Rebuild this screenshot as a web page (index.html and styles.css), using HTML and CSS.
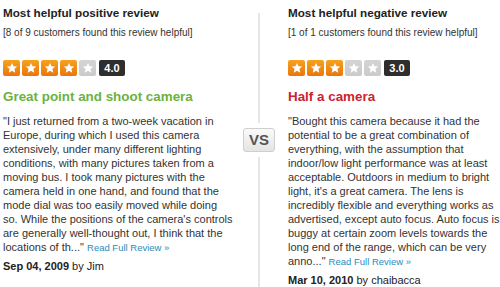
FILE: index.html
```html
<!DOCTYPE html>
<html lang="en">
<head>
    <meta charset="UTF-8">
    <meta name="viewport" content="width=device-width, initial-scale=1.0">
    <title>Most helpful reviews</title>
    <link rel="stylesheet" href="styles.css">
</head>
<body>
    <div class="compare">
        <div class="review">
            <h2 class="review-heading">Most helpful positive review</h2>
            <p class="helpful">[8 of 9 customers found this review helpful]</p>
            <div class="rating">
                <span class="star on"><svg viewBox="0 0 12 12"><path d="M6 .9l1.55 3.3 3.6.42-2.68 2.45.72 3.58L6 8.85 2.81 10.65l.72-3.58L.85 4.62l3.6-.42z"/></svg></span>
                <span class="star on"><svg viewBox="0 0 12 12"><path d="M6 .9l1.55 3.3 3.6.42-2.68 2.45.72 3.58L6 8.85 2.81 10.65l.72-3.58L.85 4.62l3.6-.42z"/></svg></span>
                <span class="star on"><svg viewBox="0 0 12 12"><path d="M6 .9l1.55 3.3 3.6.42-2.68 2.45.72 3.58L6 8.85 2.81 10.65l.72-3.58L.85 4.62l3.6-.42z"/></svg></span>
                <span class="star on"><svg viewBox="0 0 12 12"><path d="M6 .9l1.55 3.3 3.6.42-2.68 2.45.72 3.58L6 8.85 2.81 10.65l.72-3.58L.85 4.62l3.6-.42z"/></svg></span>
                <span class="star"><svg viewBox="0 0 12 12"><path d="M6 .9l1.55 3.3 3.6.42-2.68 2.45.72 3.58L6 8.85 2.81 10.65l.72-3.58L.85 4.62l3.6-.42z"/></svg></span>
                <span class="score">4.0</span>
            </div>
            <h3 class="review-title positive">Great point and shoot camera</h3>
            <p class="excerpt">"I just returned from a two-week vacation in Europe, during which I used this camera extensively, under many different lighting conditions, with many pictures taken from a moving bus. I took many pictures with the camera held in one hand, and found that the mode dial was too easily moved while doing so. While the positions of the camera's controls are generally well-thought out, I think that the locations of th..." <a class="more" href="#">Read Full Review &raquo;</a></p>
            <p class="byline"><b>Sep 04, 2009</b> by Jim</p>
            <a class="see-all" href="#">See all 9 positive reviews &rsaquo;</a>
        </div>

        <div class="versus">
            <div class="line top"></div>
            <div class="vs">VS</div>
            <div class="line"></div>
        </div>

        <div class="review right">
            <h2 class="review-heading">Most helpful negative review</h2>
            <p class="helpful">[1 of 1 customers found this review helpful]</p>
            <div class="rating">
                <span class="star on"><svg viewBox="0 0 12 12"><path d="M6 .9l1.55 3.3 3.6.42-2.68 2.45.72 3.58L6 8.85 2.81 10.65l.72-3.58L.85 4.62l3.6-.42z"/></svg></span>
                <span class="star on"><svg viewBox="0 0 12 12"><path d="M6 .9l1.55 3.3 3.6.42-2.68 2.45.72 3.58L6 8.85 2.81 10.65l.72-3.58L.85 4.62l3.6-.42z"/></svg></span>
                <span class="star on"><svg viewBox="0 0 12 12"><path d="M6 .9l1.55 3.3 3.6.42-2.68 2.45.72 3.58L6 8.85 2.81 10.65l.72-3.58L.85 4.62l3.6-.42z"/></svg></span>
                <span class="star"><svg viewBox="0 0 12 12"><path d="M6 .9l1.55 3.3 3.6.42-2.68 2.45.72 3.58L6 8.85 2.81 10.65l.72-3.58L.85 4.62l3.6-.42z"/></svg></span>
                <span class="star"><svg viewBox="0 0 12 12"><path d="M6 .9l1.55 3.3 3.6.42-2.68 2.45.72 3.58L6 8.85 2.81 10.65l.72-3.58L.85 4.62l3.6-.42z"/></svg></span>
                <span class="score">3.0</span>
            </div>
            <h3 class="review-title negative">Half a camera</h3>
            <p class="excerpt">"Bought this camera because it had the potential to be a great combination of everything, with the assumption that indoor/low light performance was at least acceptable. Outdoors in medium to bright light, it's a great camera. The lens is incredibly flexible and everything works as advertised, except auto focus. Auto focus is buggy at certain zoom levels towards the long end of the range, which can be very anno..." <a class="more" href="#">Read Full Review &raquo;</a></p>
            <p class="byline"><b>Mar 10, 2010</b> by chaibacca</p>
        </div>
    </div>
</body>
</html>
```

FILE: styles.css
```css
* {
    margin: 0;
    padding: 0;
    box-sizing: border-box;
}

body {
    font-family: "Liberation Sans", Arial, sans-serif;
    color: #333;
    background-color: #fff;
    overflow: hidden;
    width: 500px;
    height: 287px;
}

.compare {
    display: flex;
    padding-left: 3px;
    width: 500px;
}

.review {
    width: 230px;
    flex-shrink: 0;
    padding-top: 6px;
}

.review.right {
    width: auto;
    flex: 1;
}

.review-heading {
    font-size: 11.7px;
    font-weight: bold;
    color: #222;
    line-height: 14px;
}

.helpful {
    font-size: 10px;
    line-height: 12px;
    margin-top: 7px;
}

.rating {
    display: flex;
    align-items: center;
    gap: 2px;
    margin-top: 20px;
    height: 17px;
}

.star {
    width: 17px;
    height: 16px;
    border-radius: 2px;
    background: linear-gradient(#d4d4d4, #cbcbcb);
    display: flex;
    align-items: center;
    justify-content: center;
}

.star.on {
    background: linear-gradient(#f7a21f, #e9760c);
}

.star svg {
    width: 12px;
    height: 12px;
    fill: #fff;
}

.score {
    margin-left: 1px;
    width: 26px;
    height: 16px;
    border-radius: 2px;
    background-color: #2e2e2e;
    color: #fff;
    font-size: 11px;
    font-weight: bold;
    line-height: 16px;
    text-align: center;
}

.review-title {
    font-size: 13.4px;
    font-weight: bold;
    line-height: 16px;
    margin-top: 13px;
}

.positive {
    color: #6cb23e;
}

.negative {
    color: #cc2233;
}

.excerpt {
    font-size: 11px;
    line-height: 14px;
    margin-top: 9px;
}

.more {
    font-size: 9.5px;
    color: #2b8db9;
    text-decoration: none;
}

.byline {
    font-size: 11px;
    line-height: 14px;
    margin-top: 4px;
    color: #222;
}

.see-all {
    display: block;
    margin-top: 12px;
    font-size: 11px;
    color: #2b8db9;
    text-decoration: none;
}

.versus {
    width: 55px;
    flex-shrink: 0;
    display: flex;
    flex-direction: column;
    align-items: center;
    padding-top: 13px;
    padding-right: 3px;
    height: 300px;
}

.line {
    width: 2px;
    flex: 1;
    background-color: #e6e6e6;
}

.line.top {
    flex: none;
    height: 110px;
}

.vs {
    margin: 5px 0;
    width: 32px;
    height: 24px;
    border: 1px solid #cfcfcf;
    border-radius: 3px;
    background: linear-gradient(#fafafa, #e4e4e4);
    color: #555;
    font-size: 15px;
    font-weight: bold;
    line-height: 22px;
    text-align: center;
}
```
